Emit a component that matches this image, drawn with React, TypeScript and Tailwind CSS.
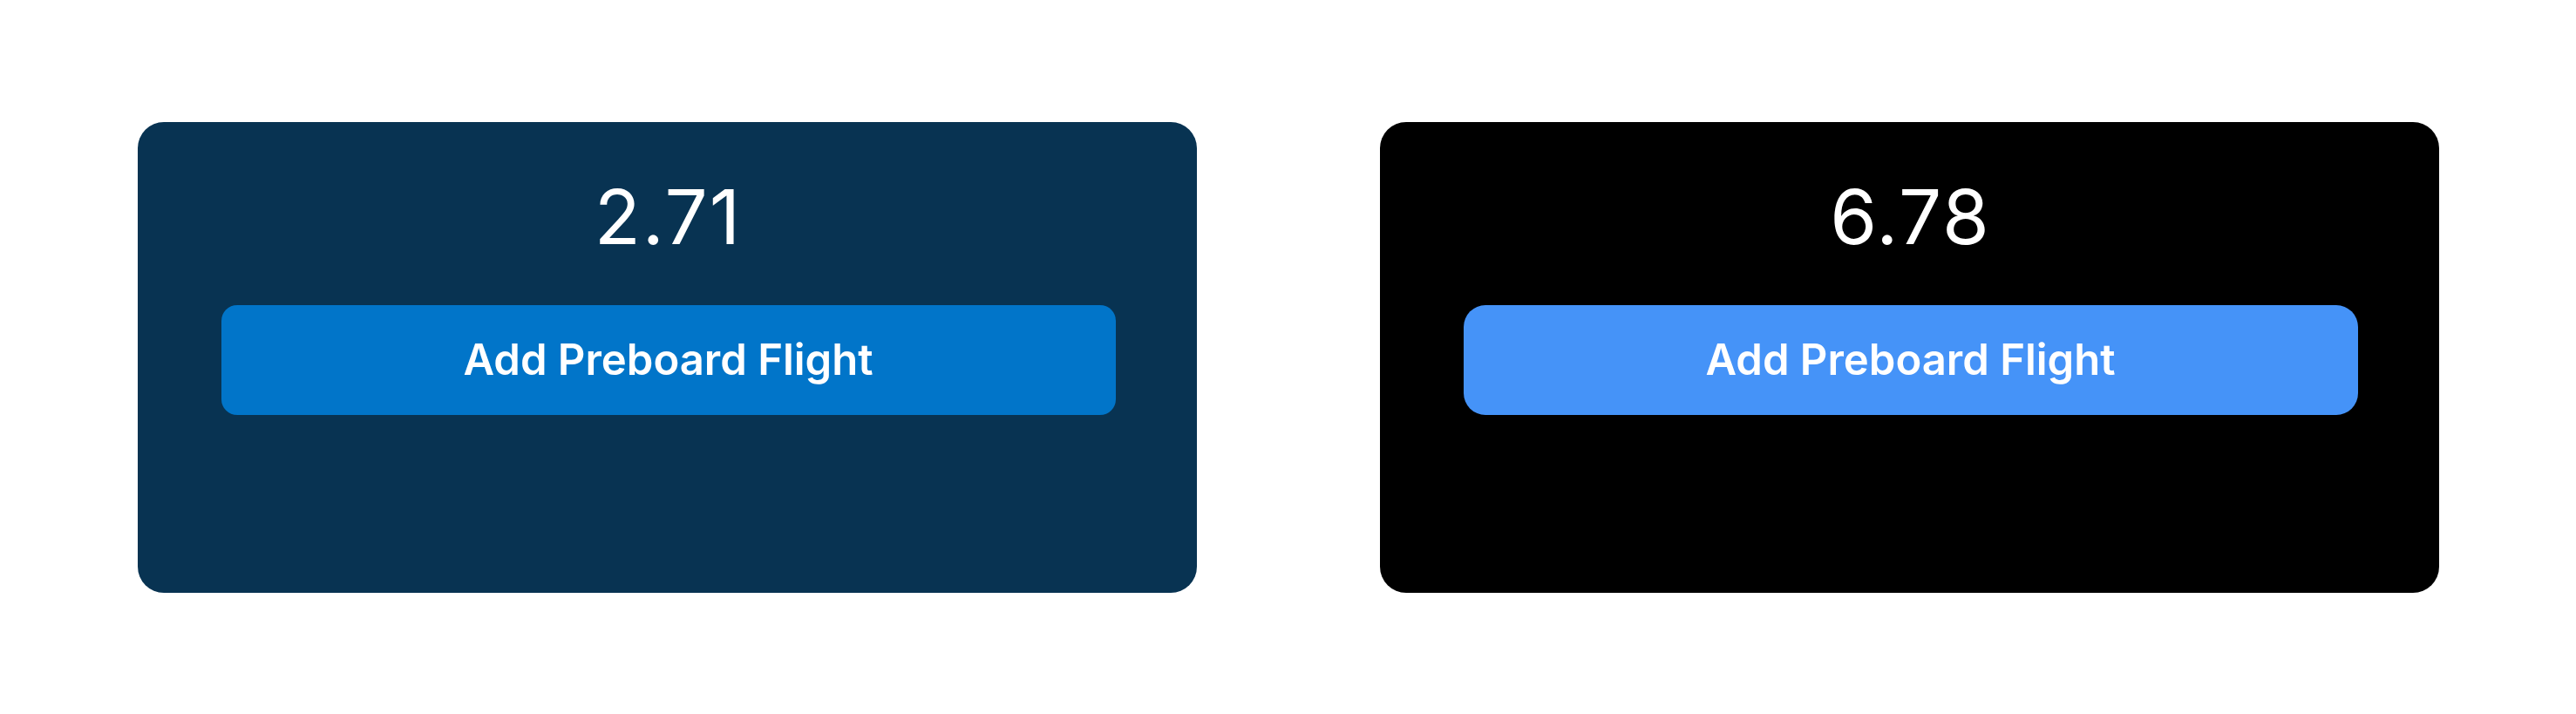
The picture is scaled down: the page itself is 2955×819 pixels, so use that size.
import React from 'react';

interface FareCardProps {
  value: string;
  cardClass: string;
  buttonClass: string;
}

function FareCard({ value, cardClass, buttonClass }: FareCardProps) {
  return (
    <div className={`w-[1215px] h-[540px] rounded-[30px] flex flex-col items-center pt-[65px] pl-[96px] pr-[93px] ${cardClass}`}>
      <div className="text-[87px] leading-none font-normal text-white tracking-[2px]">{value}</div>
      <button className={`mt-[58px] w-full h-[126px] flex items-center justify-center text-white text-[49px] font-semibold ${buttonClass}`}>
        Add Preboard Flight
      </button>
    </div>
  );
}

export default function App() {
  return (
    <div className="w-[2955px] h-[819px] bg-white flex items-center justify-center gap-[210px]" style={{ fontFamily: 'Inter, "Noto Sans", sans-serif' }}>
      <FareCard value="2.71" cardClass="bg-[#083352]" buttonClass="bg-[#0175C9] rounded-[18px]" />
      <FareCard value="6.78" cardClass="bg-black" buttonClass="bg-[#4593F8] rounded-[25px]" />
    </div>
  );
}
